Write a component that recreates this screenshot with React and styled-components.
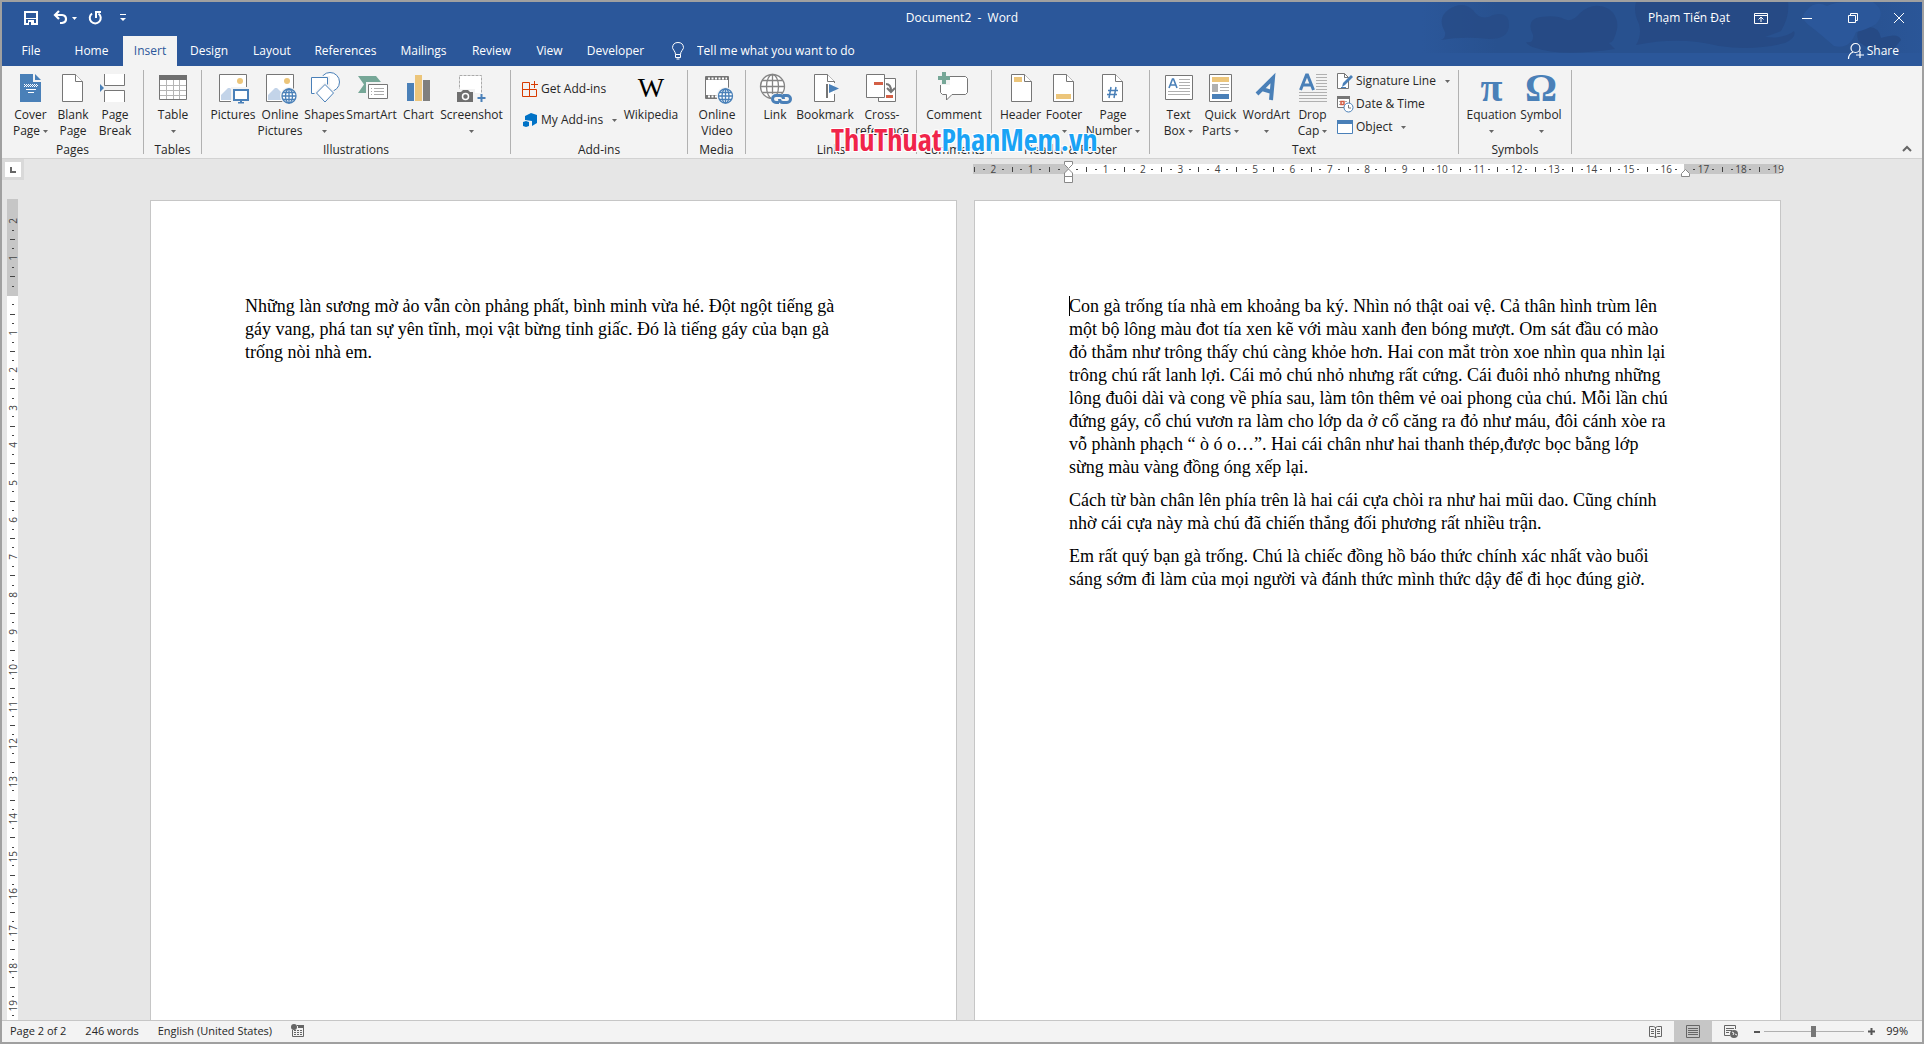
import React from 'react';
import styled, { createGlobalStyle } from 'styled-components';

const BLUE = '#4a80b8';
const GREY = '#767676';
const GOLD = '#ecc57a';
const GREEN = '#76a797';
const RED = '#d35f45';

/* ---------- icons ---------- */

const Svg = ({ size = 32, w, h, children }) => (
    <svg
        width={w || size}
        height={h || size}
        viewBox={`0 0 ${w || size} ${h || size}`}
        fill="none"
        overflow="visible"
        aria-hidden="true"
    >
        {children}
    </svg>
);

const Caret = ({ color = '#666' }) => (
    <Svg w={5} h={3}><path d="M0 0h5L2.500 3z" fill={color} /></Svg>
);

const Sheet = ({ x = 5 }) => (
    <g transform={`translate(${x} 2)`} fill="#fff" stroke={GREY}>
        <path d="M.5.5h13l7 7v20H.5z" />
        <path d="M13.500.5v7h7" />
    </g>
);

const Globe = ({ cx, cy, r, color }) => (
    <g stroke={color} strokeWidth="1.300" fill="#fff">
        <circle cx={cx} cy={cy} r={r} />
        <ellipse cx={cx} cy={cy} rx={r / 2} ry={r} fill="none" />
        <path d={`M${cx} ${cy - r}v${2 * r}M${cx - r} ${cy}h${2 * r}M${cx - r * 0.85} ${cy - r / 2}h${r * 1.7}M${cx - r * 0.85} ${cy + r / 2}h${r * 1.7}`} />
    </g>
);

const PictureFrame = () => (
    <>
        <path d="M2.500 2.500h27v27h-27z" fill="#fff" stroke={GREY} />
        <circle cx="23" cy="9" r="3" fill={GOLD} />
        <path d="M4 28v-5l7-7h2l12 12z" fill="#c3d4e9" />
    </>
);

const icons = {
    cover: (
        <Svg>
            <path d="M5 2h13v8h8v20H5z" fill={BLUE} />
            <path d="M20 2l6 6h-6z" fill={BLUE} />
            <path d="M9 12.500h14M9 14.500h14" stroke="#fff" strokeDasharray="1 1" />
            <path d="M10 13.500h13" stroke="#fff" strokeDasharray="1 1" />
            <path d="M11 17.500h10M13 20.500h6" stroke="#fff" />
        </Svg>
    ),
    blank: <Svg><Sheet /></Svg>,
    pageBreak: (
        <Svg>
            <path d="M5.500 2v11.500h20V2M5.500 30V18.500h20V30" fill="#fff" stroke={GREY} />
            <path d="M1 12l4 4-4 4z" fill={BLUE} />
        </Svg>
    ),
    table: (
        <Svg>
            <path d="M2.500 3.500h27v24h-27z" fill="#fff" stroke={GREY} />
            <path d="M3 13.500h26M3 18.500h26M3 23.500h26M9.500 8v19M16.500 8v19M22.500 8v19" stroke="#b5b5b5" />
            <path d="M2 3h28v5H2z" fill="#6f6f6f" />
        </Svg>
    ),
    pictures: (
        <Svg>
            <PictureFrame />
            <path d="M14 15h20v16H14z" fill="#f3f3f3" />
            <path d="M17 18h14v10H17z" fill="#fff" stroke={BLUE} strokeWidth="2" />
            <path d="M23 29h2v1h2v1.500h-6V30h2z" fill={BLUE} />
        </Svg>
    ),
    onlinePictures: (
        <Svg>
            <PictureFrame />
            <circle cx="25" cy="24" r="9" fill="#f3f3f3" />
            <Globe cx={25} cy={24} r={7} color={BLUE} />
        </Svg>
    ),
    shapes: (
        <Svg>
            <circle cx="21" cy="10" r="9.500" fill="#fff" stroke={BLUE} />
            <path d="M1 4h20v20H1z" fill="#f3f3f3" />
            <path d="M2.500 5.500h16v16h-16z" fill="#fff" stroke={BLUE} />
            <path d="M16 10l11 11-11 11L5 21z" fill="#f3f3f3" />
            <path d="M16 12.500l8.500 8.500-8.500 9-8.500-9z" fill="#fff" stroke={BLUE} />
        </Svg>
    ),
    smartArt: (
        <Svg>
            <path d="M2 4h18l7 8.500-7 8.500H2l6-8.500z" fill={GREEN} />
            <path d="M10 10h24v19H10z" fill="#f3f3f3" />
            <path d="M12.500 12.500h19v14h-19z" fill="#fff" stroke={GREY} />
            <path d="M18 16.500h10M18 19.500h10M18 22.500h10M15 16.500h1M15 19.500h1M15 22.500h1" stroke="#aaa" />
        </Svg>
    ),
    chart: (
        <Svg>
            <path d="M4 11h7v18H4z" fill={BLUE} />
            <path d="M12 3h7v26h-7z" fill={GOLD} />
            <path d="M20 8h7v21h-7z" fill="#7f7f7f" />
        </Svg>
    ),
    screenshot: (
        <Svg>
            <path d="M3.500 3.500h22v22h-22z" fill="#fff" stroke="#aaa" strokeDasharray="3 1" />
            <path d="M0 17h19v14H0zM19 21h13v10H19z" fill="#f3f3f3" />
            <path d="M1 20h4l2-2h5l2 2h3v10H1z" fill="#6f6f6f" />
            <circle cx="9.500" cy="24.500" r="3" stroke="#fff" strokeWidth="1.500" />
            <path d="M25.500 22v8M21.500 26h8" stroke={BLUE} strokeWidth="2" />
        </Svg>
    ),
    getAddins: (
        <Svg size={16}>
            <path d="M.5 1.500h7v7h-7zM.5 8.500h7v7h-7zM7.500 8.500h7v7h-7zM12.500 0v7M9 3.500h7" stroke="#d83b01" />
        </Svg>
    ),
    myAddins: (
        <Svg size={16}>
            <path d="M3 4l6-3 6 2v8l-5 3V9L3 8z" fill="#0072c6" />
            <path d="M1 10l3-1 3 1v4l-3 1-3-1z" fill="#0072c6" />
        </Svg>
    ),
    video: (
        <Svg>
            <path d="M4.500 4.500h23v22h-23z" fill="#fff" stroke={GREY} />
            <path d="M5 6.500h22M5 24.500h22" stroke={GREY} strokeWidth="3" />
            <path d="M7 6.500h19M7 24.500h19" stroke="#fff" strokeWidth="2" strokeDasharray="2 1.500" />
            <circle cx="24.500" cy="24" r="9" fill="#f3f3f3" />
            <Globe cx={24.5} cy={24} r={7} color={BLUE} />
        </Svg>
    ),
    link: (
        <Svg>
            <Globe cx={13.5} cy={14.5} r={12} color="#858585" />
            <path d="M12 22h21v10H12z" fill="#f3f3f3" />
            <g stroke={BLUE} strokeWidth="3">
                <path d="M20 30.500h-3a3.500 3.500 0 010-7h4q3.500 0 3.500 3.500" />
                <path d="M24 23.500h4a3.500 3.500 0 010 7h-4q-3.500 0-3.500-3.500" />
            </g>
        </Svg>
    ),
    bookmark: (
        <Svg>
            <Sheet />
            <path d="M16 10h9v17h-9z" fill="#fff" />
            <path d="M25 11h8v11h-8z" fill="#f3f3f3" />
            <path d="M18 12v14" stroke={GREY} strokeWidth="2" />
            <path d="M20 12l10 4.500L20 21z" fill={BLUE} />
        </Svg>
    ),
    crossRef: (
        <Svg>
            <path d="M12.500 6.500h17v23h-17z" fill="#fff" stroke={GREY} />
            <path d="M20 23h7v3h-7z" fill={RED} />
            <path d="M.5 2.500h18v23H.5z" fill="#fff" stroke={GREY} />
            <path d="M8 10h9v3H8z" fill={RED} />
            <path d="M20 12q5 0 5 7M21 16l4 4 4-4" stroke={GREY} strokeWidth="2" />
        </Svg>
    ),
    comment: (
        <Svg>
            <path d="M4.500 4.500h23l2 2v14l-2 2H14L8.500 28v-5.500h-4l-2-2v-14z" fill="#fff" stroke={GREY} />
            <path d="M-2 2h14v11H-2z" fill="#f3f3f3" />
            <path d="M6 0v12M0 6h12" stroke={GREEN} strokeWidth="4" />
        </Svg>
    ),
    header: <Svg><Sheet x={6} /><path d="M9 5h8v5H9z" fill={GOLD} /></Svg>,
    footer: <Svg><Sheet /><path d="M8 22h15v5H8z" fill={GOLD} /></Svg>,
    pageNumber: (
        <Svg>
            <Sheet />
            <path d="M14 15l-2 11M19 15l-2 11M11 18.500h10M10 22.500h10" stroke={BLUE} strokeWidth="1.500" />
        </Svg>
    ),
    textBox: (
        <Svg>
            <path d="M2.500 3.500h27v24h-27z" fill="#fff" stroke={GREY} />
            <path d="M6 16l3.500-9h1L14 16M7 13h6" stroke={BLUE} strokeWidth="1.600" />
            <path d="M16 7.500h11M16 10.500h11M16 13.500h11M16 16.500h11M5 19.500h22M5 22.500h22" stroke="#b0b0b0" />
        </Svg>
    ),
    quickParts: (
        <Svg>
            <path d="M4.500 2.500h22v27h-22z" fill="#fff" stroke={GREY} />
            <path d="M7 5h17v5H7z" fill={GOLD} />
            <path d="M7 12h6v8H7z" fill="#b0b0b0" />
            <path d="M15 12.500h9M15 15.500h9M15 18.500h9" stroke="#b0b0b0" />
            <path d="M7 22h17v5H7z" fill={BLUE} />
        </Svg>
    ),
    wordArt: (
        <Svg>
            <path d="M6 22L22 6l-2 22M11 17l10 3" stroke={BLUE} strokeWidth="4" />
        </Svg>
    ),
    dropCap: (
        <Svg>
            <path d="M3.500 18l6-15h1l6 15M6 13h8" stroke={BLUE} strokeWidth="3" />
            <path d="M19 2.500h11M19 5.500h11M19 8.500h11M19 11.500h11M19 14.500h11M19 17.500h11M2 20.500h28M2 23.500h28M2 26.500h28M2 29.500h28" stroke="#b0b0b0" />
        </Svg>
    ),
    signature: (
        <Svg size={16}>
            <path d="M.5.5h7l4 4v11H.5z" fill="#fff" stroke={GREY} />
            <path d="M7.500.5v4h4" stroke={GREY} />
            <path d="M5 14l1-4 8-8 2 2-8 8z" fill={BLUE} />
            <path d="M4 14.500h5" stroke={BLUE} />
        </Svg>
    ),
    date: (
        <Svg size={16}>
            <path d="M.5.5h12v11H.5z" fill="#fff" stroke={GREY} />
            <path d="M0 0h13v3H0z" fill={GREY} />
            <path d="M2 5.500h9M2 8.500h2M8 8.500h3" stroke="#aaa" strokeDasharray="2 1" />
            <path d="M4 5.500h3v3H4z" stroke={RED} strokeWidth="1.500" />
            <circle cx="11.500" cy="11.500" r="4.500" fill="#fff" stroke={BLUE} />
            <path d="M11.500 9v3H14" stroke={GREY} />
        </Svg>
    ),
    object: (
        <Svg size={16}>
            <path d="M.5 1.500h15v13H.5z" fill="#fff" stroke={BLUE} />
            <path d="M0 1h16v4H0z" fill={BLUE} />
        </Svg>
    )
};

const SaveIcon = () => (
    <Svg size={14}>
        <path d="M1 1h12v12H1z" stroke="#fff" strokeWidth="2" />
        <path d="M1 7.500h12" stroke="#fff" />
        <path d="M4 9h6v5H4z" fill="#fff" />
        <path d="M5 11h2v3H5z" fill="#2b579a" />
    </Svg>
);

const UndoIcon = () => (
    <Svg size={14}>
        <path d="M2 4h7q4 .5 4 4t-4 4H7M6 0L2 4l4 4" stroke="#fff" strokeWidth="2.200" />
    </Svg>
);

const RedoIcon = () => (
    <Svg size={14}>
        <path d="M4 2.500a5.500 5.500 0 106.500 0" stroke="#fff" strokeWidth="2" />
        <path d="M13 1H8v6" stroke="#fff" strokeWidth="2" />
    </Svg>
);

const MoreIcon = () => (
    <Svg w={6} h={8}>
        <path d="M0 .5h6" stroke="#fff" />
        <path d="M0 4h6L3 7z" fill="#fff" />
    </Svg>
);

const BulbIcon = () => (
    <Svg w={12} h={18}>
        <path d="M3.500 12.500q0-2-1.500-4Q.5 6.500.5 5.500q.5-5 5.500-5t5.500 5q0 1-1.500 3t-1.500 4zM3.500 12.500v3h5v-3M4.500 17h3" stroke="#fff" />
    </Svg>
);

const ShareIcon = () => (
    <Svg size={16}>
        <circle cx="7.500" cy="5" r="4.500" stroke="#fff" strokeWidth="1.200" />
        <path d="M.5 16q0-5 4.500-7M12 8v7M8 12h8" stroke="#fff" strokeWidth="1.200" />
    </Svg>
);

const HeaderArt = () => (
    <Art viewBox="0 0 500 51" preserveAspectRatio="xMaxYMin slice" aria-hidden="true">
        <defs>
            <linearGradient id="shade" x1="0" x2="1">
                <stop offset="0" stopColor="#28518f" stopOpacity="0" />
                <stop offset=".15" stopColor="#28518f" />
                <stop offset=".85" stopColor="#28518f" />
                <stop offset="1" stopColor="#28518f" stopOpacity=".2" />
            </linearGradient>
        </defs>
        <path d="M0 0h500v51H0z" fill="url(#shade)" />
        <g fill="#264a85">
            <path d="M19 38q5-2 4-8-8-14 3-22 14-10 25 0 8 12 20 5 16-4 16 10 0 14-20 14-26-3-48 1z" opacity=".7" />
            <path d="M104 40q8 2 7-7-8-16 8-18 16-2 23 2 8 4 16-6 14-12 29-4 10 8 8 20-3 14-8 14l6 6q-55 8-79-1-8-2-10-6z" />
            <path d="M214 0h152q2 14-7 29l-16 6q20 2 29-6 3 6-9 12-32 8-66 3-40-10-83-1 6-10 3-21-6-12-3-22z" />
            <path d="M437 40q-6-14 8-15 12-1 14 11 18-6 20 2l-8 10h-22z" />
        </g>
        <path d="M385 8q8-10 20-4 8-4 20-4h26q14 10 3 22-10 6-20 8-6 18-22 14-16-14-24-20-12-8-3-16z" fill="#2b579a" />
    </Art>
);

/* ---------- data ---------- */

const tabs = [
    ['File', 58], ['Home', 63], ['Insert', 54], ['Design', 64], ['Layout', 62],
    ['References', 85], ['Mailings', 71], ['Review', 65], ['View', 51], ['Developer', 81]
];

const groups = [
    {
        name: 'Pages', width: 142, tools: [
            { icon: 'cover', lines: ['Cover', 'Page'], width: 43, menu: true },
            { icon: 'blank', lines: ['Blank', 'Page'], width: 42 },
            { icon: 'pageBreak', lines: ['Page', 'Break'], width: 42 }
        ]
    },
    { name: 'Tables', width: 58, tools: [{ icon: 'table', lines: ['Table', ''], width: 44, menu: true }] },
    {
        name: 'Illustrations', width: 309, tools: [
            { icon: 'pictures', lines: ['Pictures'], width: 48 },
            { icon: 'onlinePictures', lines: ['Online', 'Pictures'], width: 46 },
            { icon: 'shapes', lines: ['Shapes', ''], width: 43, menu: true },
            { icon: 'smartArt', lines: ['SmartArt'], width: 51 },
            { icon: 'chart', lines: ['Chart'], width: 43 },
            { icon: 'screenshot', lines: ['Screenshot', ''], width: 63, menu: true }
        ]
    },
    {
        name: 'Add-ins', width: 177, gap: 15, tools: [
            { icon: 'wikipedia', lines: ['Wikipedia'], width: 60 }
        ], list: [
            { icon: 'getAddins', text: 'Get Add-ins' },
            { icon: 'myAddins', text: 'My Add-ins', menu: true }
        ], listFirst: true
    },
    { name: 'Media', width: 58, tools: [{ icon: 'video', lines: ['Online', 'Video'], width: 44 }] },
    {
        name: 'Links', width: 171, tools: [
            { icon: 'link', lines: ['Link'], width: 44 },
            { icon: 'bookmark', lines: ['Bookmark'], width: 56 },
            { icon: 'crossRef', lines: ['Cross-', 'reference'], width: 58 }
        ]
    },
    { name: 'Comments', width: 75, tools: [{ icon: 'comment', lines: ['Comment'], width: 60 }] },
    {
        name: 'Header & Footer', width: 158, tools: [
            { icon: 'header', lines: ['Header', ''], width: 43, menu: true },
            { icon: 'footer', lines: ['Footer', ''], width: 44, menu: true },
            { icon: 'pageNumber', lines: ['Page', 'Number'], width: 54, menu: true }
        ]
    },
    {
        name: 'Text', width: 309, gap: 7, tools: [
            { icon: 'textBox', lines: ['Text', 'Box'], width: 43, menu: true },
            { icon: 'quickParts', lines: ['Quick', 'Parts'], width: 41, menu: true },
            { icon: 'wordArt', lines: ['WordArt', ''], width: 51, menu: true },
            { icon: 'dropCap', lines: ['Drop', 'Cap'], width: 41, menu: true }
        ], list: [
            { icon: 'signature', text: 'Signature Line', menu: true },
            { icon: 'date', text: 'Date & Time' },
            { icon: 'object', text: 'Object', menu: true }
        ]
    },
    {
        name: 'Symbols', width: 113, tools: [
            { icon: 'pi', lines: ['Equation', ''], width: 51, menu: true },
            { icon: 'omega', lines: ['Symbol', ''], width: 48, menu: true }
        ]
    }
];

const firstPage = [
    [
        'Những làn sương mờ ảo vẫn còn phảng phất, bình minh vừa hé. Đột ngột tiếng gà',
        'gáy vang, phá tan sự yên tĩnh, mọi vật bừng tỉnh giấc. Đó là tiếng gáy của bạn gà',
        'trống nòi nhà em.'
    ]
];

const secondPage = [
    [
        'Con gà trống tía nhà em khoảng ba ký. Nhìn nó thật oai vệ. Cả thân hình trùm lên',
        'một bộ lông màu đot tía xen kẽ với màu xanh đen bóng mượt. Om sát đầu có mào',
        'đỏ thắm như trông thấy chú càng khỏe hơn. Hai con mắt tròn xoe nhìn qua nhìn lại',
        'trông chú rất lanh lợi. Cái mỏ chú nhỏ nhưng rất cứng. Cái đuôi nhỏ nhưng những',
        'lông đuôi dài và cong về phía sau, làm tôn thêm vẻ oai phong của chú. Mỗi lần chú',
        'đứng gáy, cổ chú vươn ra làm cho lớp da ở cổ căng ra đỏ như máu, đôi cánh xòe ra',
        'vỗ phành phạch “ ò ó o…”. Hai cái chân như hai thanh thép,được bọc bằng lớp',
        'sừng màu vàng đồng óng xếp lại.'
    ],
    [
        'Cách từ bàn chân lên phía trên là hai cái cựa chòi ra như hai mũi dao. Cũng chính',
        'nhờ cái cựa này mà chú đã chiến thắng đối phương rất nhiều trận.'
    ],
    [
        'Em rất quý bạn gà trống. Chú là chiếc đồng hồ báo thức chính xác nhất vào buổi',
        'sáng sớm đi làm của mọi người và đánh thức mình thức dậy để đi học đúng giờ.'
    ]
];

/* ---------- components ---------- */

const glyphs = { wikipedia: 'W', pi: 'π', omega: 'Ω' };

const Tool = ({ icon, lines, width, menu }) => (
    <ToolButton type="button" $width={width}>
        <IconSlot>
            {glyphs[icon]
                ? <Glyph $dark={icon === 'wikipedia'}>{glyphs[icon]}</Glyph>
                : icons[icon]}
        </IconSlot>
        {lines.map((line, i) => (
            <ToolLine key={i}>
                {line}
                {menu && i === lines.length - 1 && <Caret />}
            </ToolLine>
        ))}
    </ToolButton>
);

const Group = ({ group }) => {
    const list = group.list && (
        <ToolList $gap={group.gap}>
            {group.list.map(item => (
                <ListButton type="button" key={item.text}>
                    {icons[item.icon]}
                    <span>{item.text}</span>
                    {item.menu && <CaretSlot><Caret /></CaretSlot>}
                </ListButton>
            ))}
        </ToolList>
    );

    return (
        <GroupBox $width={group.width} aria-label={group.name}>
            <GroupTools>
                {group.listFirst && list}
                {group.tools.map(tool => <Tool key={tool.icon} {...tool} />)}
                {!group.listFirst && list}
            </GroupTools>
            <GroupName>{group.name}</GroupName>
        </GroupBox>
    );
};

// one mark for every quarter of a centimetre
const Marks = ({ from, to, vertical, skip }) => {
    const marks = [];
    for (let q = from; q <= to; q++) {
        let mark = <Dot />;
        if (q === 0 || q === skip) mark = null;
        else if (q % 4 === 0) mark = <MarkText $vertical={vertical}>{Math.abs(q / 4)}</MarkText>;
        else if (q % 2 === 0) mark = <Dash $vertical={vertical} />;
        marks.push(<Mark key={q}>{mark}</Mark>);
    }
    return <Scale $count={marks.length} $vertical={vertical}>{marks}</Scale>;
};

const Paper = ({ paragraphs, active }) => (
    <PaperSheet>
        {paragraphs.map((lines, i) => (
            <Paragraph key={i}>
                {active && i === 0 && <TextCursor />}
                {lines.map(line => <Line key={line}>{line}</Line>)}
            </Paragraph>
        ))}
    </PaperSheet>
);

const App = () => (
    <>
        <GlobalStyle />
        <Window>
            <Top>
                <HeaderArt />
                <TitleBar>
                    <QuickAccess>
                        <QuickButton type="button" aria-label="Save" $width={34}><SaveIcon /></QuickButton>
                        <QuickButton type="button" aria-label="Undo" $width={24}><UndoIcon /></QuickButton>
                        <QuickButton type="button" aria-label="Undo list" $width={5}><Caret color="#fff" /></QuickButton>
                        <QuickButton type="button" aria-label="Redo" $width={36}><RedoIcon /></QuickButton>
                        <QuickButton type="button" aria-label="Customize" $width={20}><MoreIcon /></QuickButton>
                    </QuickAccess>
                    <DocTitle>Document2&nbsp; -&nbsp; Word</DocTitle>
                    <WindowTools>
                        <UserName type="button">Phạm Tiến Đạt</UserName>
                        <WindowButton type="button" aria-label="Ribbon options">
                            <Svg w={14} h={11}>
                                <path d="M.5.5h13v10H.5zM1 2.500h12M7 9V4M4.500 6.500L7 4l2.500 2.500" stroke="#fff" />
                            </Svg>
                        </WindowButton>
                        <WindowButton type="button" aria-label="Minimize">
                            <Svg w={10} h={10}><path d="M0 5.500h10" stroke="#fff" /></Svg>
                        </WindowButton>
                        <WindowButton type="button" aria-label="Restore">
                            <Svg w={10} h={10}><path d="M.5 2.500h7v7h-7zM2.500 2.500v-2h7v7h-2" stroke="#fff" /></Svg>
                        </WindowButton>
                        <WindowButton type="button" aria-label="Close">
                            <Svg w={10} h={10}><path d="M0 0l10 10M10 0L0 10" stroke="#fff" /></Svg>
                        </WindowButton>
                    </WindowTools>
                </TitleBar>
                <TabBar>
                    {tabs.map(([name, width]) => (
                        <Tab type="button" key={name} $width={width} $active={name === 'Insert'}>{name}</Tab>
                    ))}
                    <TellMe>
                        <BulbIcon />
                        <TellMeInput aria-label="Tell me what you want to do" placeholder="Tell me what you want to do" />
                    </TellMe>
                    <ShareButton type="button"><ShareIcon />Share</ShareButton>
                </TabBar>
            </Top>
            <Ribbon>
                {groups.map(group => <Group key={group.name} group={group} />)}
                <Collapse type="button" aria-label="Collapse the ribbon">
                    <Svg w={8} h={6}><path d="M0 5l4-4 4 4" stroke="#666" strokeWidth="2" /></Svg>
                </Collapse>
                <Watermark><Red>ThuThuat</Red>PhanMem.vn</Watermark>
            </Ribbon>
            <Workspace>
                <Side>
                    <Corner type="button" aria-label="Tab selector">
                        <Svg w={6} h={6}><path d="M1 0v5h5" stroke="#666" strokeWidth="2" /></Svg>
                    </Corner>
                    <VerticalRuler>
                        <Marks from={-8} to={77} vertical />
                    </VerticalRuler>
                </Side>
                <Canvas>
                    <RulerRow>
                        <Ruler>
                            <Marks from={-10} to={76} skip={66} />
                            <Indent>
                                <Svg w={9} h={22}>
                                    <path d="M.5.5h8v3l-4 4-4-4zM.5 15.500v-3.500l4-4 4 4v3.500zM.5 15.500h8v6h-8z" fill="#fff" stroke="#888" />
                                </Svg>
                            </Indent>
                            <RightIndent>
                                <Svg w={9} h={8}><path d="M.5 7.500v-3l4-4 4 4v3z" fill="#fff" stroke="#888" /></Svg>
                            </RightIndent>
                        </Ruler>
                    </RulerRow>
                    <Papers>
                        <Paper paragraphs={firstPage} />
                        <Paper paragraphs={secondPage} active />
                    </Papers>
                </Canvas>
            </Workspace>
            <StatusBar>
                <StatusButton type="button">Page 2 of 2</StatusButton>
                <StatusButton type="button">246 words</StatusButton>
                <StatusButton type="button">English (United States)</StatusButton>
                <StatusButton type="button" aria-label="Macro recording">
                    <Svg w={13} h={13}>
                        <path d="M1.500 6v6.500h11v-11H6" stroke="#666" />
                        <path d="M7 1h6v3H7z" fill="#666" />
                        <path d="M3 6.500h9M3 8.500h9M3 10.500h9" stroke="#666" strokeDasharray="2 1" />
                        <circle cx="3" cy="3" r="3" fill="#666" />
                    </Svg>
                </StatusButton>
                <ViewTools>
                    <ViewButton type="button" aria-label="Read mode">
                        <Svg w={13} h={13}>
                            <path d="M.5 1.500h4l2 1 2-1h4v10h-4l-2 1-2-1h-4zM6.500 2v11" stroke="#666" />
                            <path d="M2 4.500h3M2 6.500h3M2 8.500h3M8 4.500h3M8 6.500h3M8 8.500h3" stroke="#666" />
                        </Svg>
                    </ViewButton>
                    <ViewButton type="button" aria-label="Print layout" $active>
                        <Svg w={14} h={13}>
                            <path d="M.5.5h13v12H.5zM2 3.500h10M2 5.500h10M2 7.500h10M2 9.500h10" stroke="#666" />
                        </Svg>
                    </ViewButton>
                    <ViewButton type="button" aria-label="Web layout">
                        <Svg w={14} h={13}>
                            <path d="M11.500 4V.5H.5v10H6M2 3.500h8M2 5.500h6M2 7.500h3" stroke="#666" />
                            <circle cx="10" cy="9" r="4" fill="#666" />
                            <path d="M8 7l2 1-1 2M11 9l2 1" stroke="#f3f3f3" />
                        </Svg>
                    </ViewButton>
                    <ZoomButton type="button" aria-label="Zoom out">
                        <Svg w={6} h={6}><path d="M0 3h6" stroke="#555" strokeWidth="2" /></Svg>
                    </ZoomButton>
                    <Slider type="range" aria-label="Zoom" min="0" max="100" defaultValue="49" />
                    <ZoomButton type="button" aria-label="Zoom in">
                        <Svg w={7} h={7}><path d="M0 3.500h7M3.500 0v7" stroke="#555" strokeWidth="2" /></Svg>
                    </ZoomButton>
                    <ZoomValue type="button">99%</ZoomValue>
                </ViewTools>
            </StatusBar>
        </Window>
    </>
);

/* ---------- styles ---------- */

const GlobalStyle = createGlobalStyle`
    * {
        box-sizing: border-box;
    }
    body {
        margin: 0;
        font-family: 'Open Sans', 'Noto Sans', sans-serif;
        font-size: 12px;
        line-height: 16px;
        color: #262626;
    }
    button, input {
        margin: 0;
        padding: 0;
        border: none;
        background: none;
        font: inherit;
        color: inherit;
    }
    svg {
        display: block;
        flex: none;
    }
`;

const Window = styled.div`
    display: flex;
    flex-direction: column;
    height: 100vh;
    border: 2px solid #a0a0a0;
    background: #e6e6e6;
    overflow: hidden;
`;

const Top = styled.header`
    position: relative;
    background: #2b579a;
    color: #fff;
`;

const Art = styled.svg`
    position: absolute;
    top: 0;
    right: 0;
    width: 500px;
    height: 51px;
`;

const TitleBar = styled.div`
    position: relative;
    display: grid;
    grid-template-columns: 1fr auto 1fr;
    align-items: center;
    height: 34px;
    padding-bottom: 2px;
`;

const QuickAccess = styled.div`
    display: flex;
    padding-left: 12px;
`;

const QuickButton = styled.button`
    display: flex;
    align-items: center;
    justify-content: center;
    width: ${props => props.$width}px;
    height: 30px;
`;

const DocTitle = styled.h1`
    margin: 0;
    font-size: 12px;
    font-weight: normal;
`;

const WindowTools = styled.div`
    display: flex;
    justify-content: flex-end;
    align-items: center;
`;

const UserName = styled.button`
    margin-right: 8px;
`;

const WindowButton = styled.button`
    display: flex;
    align-items: center;
    justify-content: center;
    width: 46px;
    height: 30px;
`;

const TabBar = styled.nav`
    position: relative;
    display: flex;
    align-items: stretch;
    height: 30px;
`;

const Tab = styled.button`
    width: ${props => props.$width}px;
    background: ${props => props.$active ? '#f3f3f3' : 'transparent'};
    color: ${props => props.$active ? '#2b579a' : '#fff'};
    white-space: nowrap;
`;

const TellMe = styled.label`
    display: flex;
    align-items: center;
    gap: 13px;
    margin-left: 16px;
`;

const TellMeInput = styled.input`
    width: 190px;
    color: #fff;
    outline: none;
    &::placeholder {
        color: #fff;
        opacity: 1;
    }
`;

const ShareButton = styled.button`
    display: flex;
    align-items: center;
    gap: 3px;
    margin-left: auto;
    padding-right: 23px;
`;

const Ribbon = styled.section`
    position: relative;
    display: flex;
    padding: 4px 0;
    border-bottom: 1px solid #d2d2d2;
    background: #f3f3f3;
`;

const GroupBox = styled.section`
    display: flex;
    flex-direction: column;
    justify-content: space-between;
    flex: none;
    width: ${props => props.$width}px;
    height: 84px;
    padding-top: 2px;
    border-right: 1px solid #b1b1b1;
`;

const GroupTools = styled.div`
    display: flex;
    height: 68px;
    padding-left: 7px;
`;

const GroupName = styled.div`
    height: 12px;
    line-height: 16px;
    text-align: center;
    white-space: nowrap;
`;

const ToolButton = styled.button`
    display: flex;
    flex-direction: column;
    align-items: center;
    flex: none;
    width: ${props => props.$width}px;
`;

const IconSlot = styled.span`
    display: flex;
    align-items: center;
    justify-content: center;
    height: 32px;
    margin-bottom: 3px;
`;

const Glyph = styled.span`
    font-family: 'Liberation Serif', serif;
    font-size: ${props => props.$dark ? 28 : 40}px;
    font-weight: ${props => props.$dark ? 'normal' : 'bold'};
    line-height: 32px;
    color: ${props => props.$dark ? '#000' : BLUE};
`;

const ToolLine = styled.span`
    display: flex;
    align-items: center;
    gap: 3px;
    height: 16px;
    white-space: nowrap;
`;

const ToolList = styled.div`
    display: flex;
    flex-direction: column;
    align-items: flex-start;
    gap: ${props => props.$gap}px;
    width: 103px;
    padding: ${props => props.$gap > 10 ? 9 : 1}px 0 0 4px;
`;

const ListButton = styled.button`
    display: flex;
    align-items: center;
    gap: 3px;
    height: 16px;
    white-space: nowrap;
`;

const CaretSlot = styled.span`
    padding-left: 6px;
`;

const Collapse = styled.button`
    align-self: flex-end;
    margin-left: auto;
    padding: 0 11px 2px;
`;

const Watermark = styled.div`
    position: absolute;
    top: 58px;
    left: 829px;
    font-family: 'Open Sans Condensed', 'Open Sans', sans-serif;
    font-size: 30px;
    font-weight: bold;
    line-height: 32px;
    color: #1aa3f5;
    text-shadow: 1px 1px #fff, -1px -1px #fff, 1px -1px #fff, -1px 1px #fff;
    white-space: nowrap;
    pointer-events: none;
`;

const Red = styled.span`
    color: #f0254a;
`;

const Workspace = styled.main`
    display: flex;
    flex: 1;
    min-height: 0;
`;

const Side = styled.div`
    display: flex;
    flex-direction: column;
    flex: none;
    width: 22px;
`;

const Corner = styled.button`
    display: flex;
    align-items: center;
    justify-content: center;
    height: 21px;
    margin-bottom: 19px;
    border: 3px solid #d9d9d9;
    background: #fff;
`;

const VerticalRuler = styled.div`
    display: flex;
    flex: 1;
    min-height: 0;
    width: 11px;
    margin-left: 5px;
    padding-top: 17px;
    background: linear-gradient(#c6c6c6 97px, #fff 97px);
`;

const Canvas = styled.div`
    display: flex;
    flex-direction: column;
    flex: 1;
    min-width: 0;
    padding-right: 15px;
    overflow: hidden;
`;

const RulerRow = styled.div`
    display: flex;
    justify-content: center;
    flex: none;
    height: 41px;
    padding: 5px 0 0 822px;
`;

const Ruler = styled.div`
    position: relative;
    flex: none;
    width: 807px;
    height: 10px;
    background: linear-gradient(90deg, #c6c6c6 95px, #fff 95px, #fff 711px, #c6c6c6 711px);
`;

const Scale = styled.div`
    display: grid;
    ${props => props.$vertical
        ? `grid-template-rows: repeat(${props.$count}, minmax(0, 1fr)); width: 11px;`
        : `grid-template-columns: repeat(${props.$count}, minmax(0, 1fr)); height: 10px; margin: 0 -3px;`}
`;

const Mark = styled.span`
    display: flex;
    align-items: center;
    justify-content: center;
`;

const MarkText = styled.span`
    font-size: 10px;
    line-height: 10px;
    color: #444;
    ${props => props.$vertical && 'writing-mode: vertical-rl; transform: rotate(180deg);'}
`;

const Dot = styled.span`
    width: 2px;
    height: 1px;
    background: #444;
`;

const Dash = styled.span`
    width: ${props => props.$vertical ? 5 : 1}px;
    height: ${props => props.$vertical ? 1 : 5}px;
    background: #444;
`;

const Indent = styled.span`
    position: absolute;
    top: -3px;
    left: 91px;
`;

const RightIndent = styled.span`
    position: absolute;
    top: 5px;
    left: 708px;
`;

const Papers = styled.div`
    display: flex;
    justify-content: center;
    gap: 17px;
    flex: 1;
    min-height: 0;
`;

const PaperSheet = styled.article`
    flex: none;
    width: 807px;
    padding: 94px 93px 0 94px;
    border: 1px solid #c6c6c6;
    border-bottom: none;
    background: #fff;
    font-family: 'Liberation Serif', serif;
    font-size: 18px;
    line-height: 23px;
    color: #000;
`;

const Paragraph = styled.p`
    position: relative;
    margin: 0 0 10px;
`;

const Line = styled.span`
    display: block;
    white-space: nowrap;
`;

const TextCursor = styled.span`
    position: absolute;
    top: 1px;
    left: 0;
    width: 1px;
    height: 20px;
    background: #000;
`;

const StatusBar = styled.footer`
    display: flex;
    align-items: center;
    gap: 19px;
    flex: none;
    height: 22px;
    padding-left: 8px;
    border-top: 1px solid #c6c6c6;
    background: #f3f3f3;
    font-size: 11px;
`;

const StatusButton = styled.button`
    padding-bottom: 2px;
    white-space: nowrap;
`;

const ViewTools = styled.div`
    display: flex;
    align-items: center;
    align-self: stretch;
    margin-left: auto;
    padding-right: 14px;
`;

const ViewButton = styled.button`
    display: flex;
    align-items: center;
    justify-content: center;
    align-self: stretch;
    width: 38px;
    background: ${props => props.$active ? '#c6c6c6' : 'transparent'};
`;

const ZoomButton = styled.button`
    display: flex;
    align-items: center;
    justify-content: center;
    width: 14px;
    height: 20px;
`;

const Slider = styled.input`
    width: 100px;
    height: 20px;
    appearance: none;
    background: linear-gradient(#b0b0b0, #b0b0b0) center / 100% 1px no-repeat;
    &::-webkit-slider-thumb {
        appearance: none;
        width: 5px;
        height: 11px;
        background: #777;
    }
`;

const ZoomValue = styled.button`
    width: 30px;
    padding-bottom: 2px;
    text-align: right;
`;

export default App;
